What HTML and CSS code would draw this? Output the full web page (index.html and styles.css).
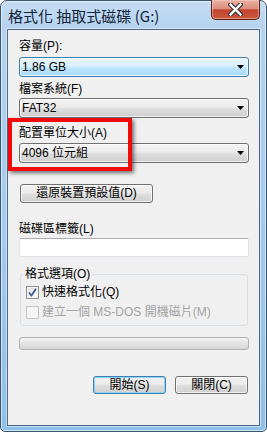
FILE: index.html
```html
<!DOCTYPE html>
<html lang="zh-Hant">
<head>
  <meta charset="UTF-8">
  <title>格式化 抽取式磁碟 (G:)</title>
  <link rel="stylesheet" href="styles.css">
</head>
<body>
  <div class="window">
    <div class="titlebar">
      <span class="title">格式化 抽取式磁碟 (G:)</span>
      <span class="close-btn">
        <svg width="15" height="13" viewBox="0 0 15 13">
          <path d="M2.5 1.5 L12.5 11.5 M12.5 1.5 L2.5 11.5" stroke="#3a3a3a" stroke-width="4.6" stroke-linecap="square"/>
          <path d="M2.5 1.5 L12.5 11.5 M12.5 1.5 L2.5 11.5" stroke="#fff" stroke-width="2.4" stroke-linecap="square"/>
        </svg>
      </span>
    </div>

    <div class="client">
      <div class="field-label first">容量(P):</div>
      <div class="combo combo-hot">
        <span>1.86 GB</span>
        <svg class="arrow" width="7" height="4" viewBox="0 0 7 4"><polygon points="0,0 7,0 3.5,4" fill="#000"/></svg>
      </div>

      <div class="field-label">檔案系統(F)</div>
      <div class="combo combo-2">
        <span>FAT32</span>
        <svg class="arrow" width="7" height="4" viewBox="0 0 7 4"><polygon points="0,0 7,0 3.5,4" fill="#000"/></svg>
      </div>

      <div class="field-label label-unit">配置單位大小(A)</div>
      <div class="combo combo-3">
        <span>4096 位元組</span>
        <svg class="arrow" width="7" height="4" viewBox="0 0 7 4"><polygon points="0,0 7,0 3.5,4" fill="#000"/></svg>
      </div>

      <div class="btn btn-restore">還原裝置預設值(D)</div>

      <div class="field-label label-volume">磁碟區標籤(L)</div>
      <div class="textbox"></div>

      <fieldset class="options">
        <legend>格式選項(O)</legend>
        <div class="check-row">
          <span class="check checked">
            <svg width="9" height="9" viewBox="0 0 9 9">
              <path d="M1 4.5 L3.5 7.5 L8 0.8" fill="none" stroke="#3f5a93" stroke-width="1.8"/>
            </svg>
          </span>
          快速格式化(Q)
        </div>
        <div class="check-row disabled">
          <span class="check"></span>
          建立一個 MS-DOS 開機磁片(M)
        </div>
      </fieldset>

      <div class="progress"></div>

      <div class="actions">
        <div class="btn btn-default">開始(S)</div>
        <div class="btn">關閉(C)</div>
      </div>

      <!-- 강조 표시 -->
      <div class="highlight"></div>
    </div>
  </div>
</body>
</html>
```

FILE: styles.css
```css
body {
  margin: 0;
  background-color: #fff;
  font-family: "Liberation Sans", "Noto Sans CJK TC", sans-serif;
  font-size: 12px;
  color: #000;
}

.window {
  box-sizing: border-box;
  width: 267px;
  height: 432px;
  padding: 0 6px 6px 6px;
  border: 1px solid #3b5670;
  border-radius: 7px 7px 5px 5px;
  background: linear-gradient(to bottom, #c6ddf3 0, #b4d2ee 28px, #a2c9eb 60%, #8fc0e8 100%);
  box-shadow: inset 0 0 0 1px rgba(255, 255, 255, 0.55);
}

.titlebar {
  display: flex;
  align-items: flex-start;
  justify-content: space-between;
  height: 28px;
}

.title {
  margin-top: 5px;
  padding-left: 1px;
  font-family: "Noto Sans CJK TC", sans-serif;
  font-size: 15px;
  line-height: 19px;
  color: #14243a;
  white-space: nowrap;
}

.close-btn {
  display: flex;
  align-items: center;
  justify-content: center;
  box-sizing: border-box;
  width: 49px;
  height: 20px;
  margin-top: -1px;
  border: 1px solid #5e1f16;
  border-top: none;
  border-radius: 0 0 5px 5px;
  background: linear-gradient(to bottom, #eab2a5 0, #dc8e7d 45%, #c4452f 52%, #c85a3e 100%);
  box-shadow: inset 0 0 0 1px rgba(255, 220, 210, 0.45);
}

.client {
  position: relative;
  box-sizing: border-box;
  height: 397px;
  padding: 9px 10px 0 11px;
  background-color: #f0f0f0;
  border: 1px solid #4d6985;
  box-shadow: 0 0 0 1px rgba(255, 255, 255, 0.45);
}

.field-label {
  height: 14px;
  line-height: 14px;
  margin-top: 5px;
  white-space: nowrap;
}

.field-label.first {
  margin-top: 0;
}

.label-unit {
  margin-top: 8px;
}

.label-volume {
  margin-top: 19px;
}

.combo {
  display: flex;
  align-items: center;
  justify-content: space-between;
  box-sizing: border-box;
  height: 20px;
  margin-top: 4px;
  padding: 0 4px 0 2px;
  border: 1px solid #707070;
  border-radius: 3px;
  background: linear-gradient(to bottom, #f4f4f4 0, #ebebeb 45%, #dddddd 55%, #cfcfcf 100%);
  box-shadow: inset 0 0 0 1px rgba(255, 255, 255, 0.7);
  line-height: 18px;
}

.combo-hot {
  border-color: #3c7fb1;
  background: linear-gradient(to bottom, #eaf6fd 0, #d9f0fc 45%, #bee6fd 55%, #a7d9f5 100%);
}

.combo-2 {
  margin-top: 2px;
}

.combo-3 {
  margin-top: 3px;
}

.btn {
  box-sizing: border-box;
  height: 19px;
  border: 1px solid #707070;
  border-radius: 3px;
  background: linear-gradient(to bottom, #f2f2f2 0, #ebebeb 45%, #dddddd 55%, #cfcfcf 100%);
  box-shadow: inset 0 0 0 1px rgba(255, 255, 255, 0.75);
  text-align: center;
  line-height: 17px;
  white-space: nowrap;
}

.btn-restore {
  width: 133px;
  margin: 21px 0 0 1px;
}

.textbox {
  box-sizing: border-box;
  height: 19px;
  margin-top: 2px;
  background-color: #fff;
  border: 1px solid #e2e3ea;
  border-top-color: #abadb3;
  border-radius: 2px;
}

.options {
  margin: 10px 1px 0 1px;
  padding: 5px 6px 6px 5px;
  border: 1px solid #d5dfe5;
  border-radius: 3px;
  min-width: 0;
}

.options legend {
  margin-left: -3px;
  padding: 0 2px;
  line-height: 14px;
}

.check-row {
  display: flex;
  align-items: center;
  gap: 3px;
  height: 13px;
  line-height: 13px;
  white-space: nowrap;
}

.check-row + .check-row {
  margin-top: 7px;
}

.check {
  display: flex;
  align-items: center;
  justify-content: center;
  box-sizing: border-box;
  width: 13px;
  height: 13px;
  border: 1px solid #8f8f8f;
  background: linear-gradient(135deg, #dcdcdc 0, #f4f4f4 60%, #fff 100%);
  box-shadow: inset 0 0 0 1px #f4f4f4;
}

.check-row.disabled {
  color: #a3a3a3;
}

.check-row.disabled .check {
  border-color: #c6c6c6;
  background: #f4f4f4;
}

.progress {
  box-sizing: border-box;
  height: 13px;
  margin-top: 11px;
  border: 1px solid #b2b2b2;
  border-radius: 3px;
  background: linear-gradient(to bottom, #f3f3f3 0, #e3e3e3 50%, #d6d6d6 100%);
}

.actions {
  display: flex;
  justify-content: flex-end;
  gap: 9px;
  margin-top: 26px;
  padding-right: 1px;
}

.actions .btn {
  width: 73px;
  height: 18px;
  line-height: 16px;
}

.btn-default {
  border-color: #3c7fb1;
  box-shadow: inset 0 0 0 1px #8fd3f5;
}

.highlight {
  position: absolute;
  left: 0;
  top: 88px;
  box-sizing: border-box;
  width: 124px;
  height: 53px;
  border: 4px solid #f20a0a;
  box-shadow: 2px 2px 4px rgba(0, 0, 0, 0.55);
}
```
